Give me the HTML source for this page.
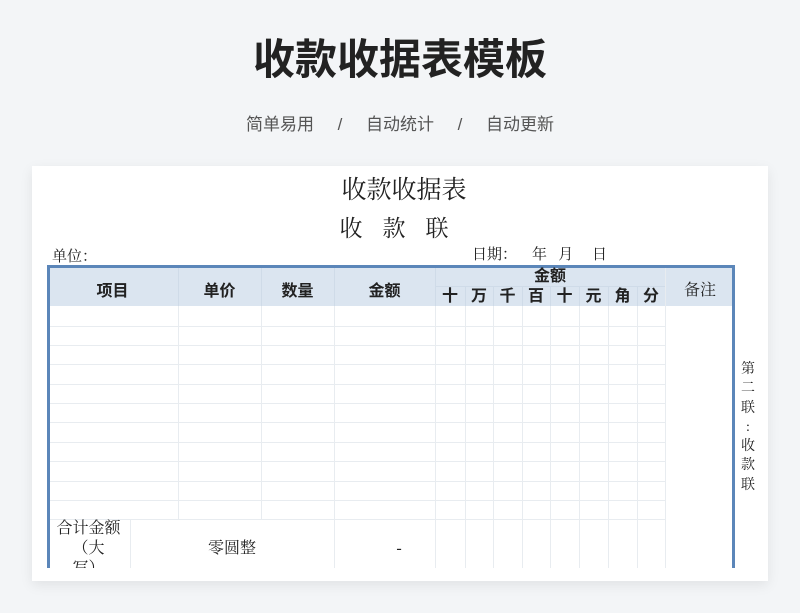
<!DOCTYPE html>
<html><head><meta charset="utf-8"><style>
*{margin:0;padding:0;box-sizing:border-box}
body{width:800px;height:613px;background:#f3f5f7;position:relative;overflow:hidden;font-family:"Liberation Sans","Noto Sans CJK SC",sans-serif}
.a{position:absolute}
.t{position:absolute;left:0;width:800px;text-align:center}
.card{position:absolute;left:32px;top:166px;width:736px;height:415px;background:#fff;box-shadow:0 4px 12px rgba(0,0,0,.08)}
.serif{font-family:"Liberation Serif","Noto Serif CJK SC",serif;color:#222}
.h{background:#dbe5f0}
.vl{position:absolute;width:1px;background:#e8ecf0}
.hl{position:absolute;height:1px;background:#e8ecf0}
.c{position:absolute;text-align:center;color:#222}
</style></head><body>
<div class="t" style="top:32px;font-size:42px;font-weight:bold;color:#222;line-height:56px">收款收据表模板</div>
<div class="t" style="top:113px;font-size:17px;color:#555;line-height:24px;word-spacing:0">简单易用&nbsp;&nbsp;&nbsp;&nbsp;&nbsp;/&nbsp;&nbsp;&nbsp;&nbsp;&nbsp;自动统计&nbsp;&nbsp;&nbsp;&nbsp;&nbsp;/&nbsp;&nbsp;&nbsp;&nbsp;&nbsp;自动更新</div>
<div class="card"></div>
<div class="a serif" style="left:0;width:808px;text-align:center;top:175px;font-size:25px;line-height:32px">收款收据表</div>
<div class="a serif" style="left:0;width:808px;text-align:center;top:214px;font-size:23px;line-height:30px;letter-spacing:20px">收款联</div>
<div class="a serif" style="left:52px;top:247px;font-size:15px;line-height:20px">单位：</div>
<div class="a serif" style="left:472px;top:245px;font-size:15px;line-height:20px;white-space:pre">日期：    年   月     日</div>
<!-- header -->
<div class="a h" style="left:47px;top:266px;width:688px;height:40px"></div>
<div class="a" style="left:47px;top:265px;width:688px;height:310px;border:3px solid #5b86b9;border-bottom:none"></div>
<div id="g"></div>
<div class="c" style="left:47px;top:277px;width:131px;font-size:16px;font-weight:bold">项目</div>
<div class="c" style="left:178px;top:277px;width:83px;font-size:16px;font-weight:bold">单价</div>
<div class="c" style="left:261px;top:277px;width:73px;font-size:16px;font-weight:bold">数量</div>
<div class="c" style="left:334px;top:277px;width:101px;font-size:16px;font-weight:bold">金额</div>
<div class="c" style="left:435px;top:267px;width:230px;font-size:16px;font-weight:bold;line-height:20px">金额</div>
<div class="c serif" style="left:665px;top:277px;width:70px;font-size:16px">备注</div>
<div class="c serif" style="left:47px;top:519px;width:83px;font-size:16px;line-height:20px">合计金额<br>（大<br>写）</div>
<div class="c serif" style="left:130px;top:539px;width:204px;font-size:16px;line-height:20px">零圆整</div>
<div class="c serif" style="left:334px;top:539px;width:130px;font-size:16px;line-height:20px">-</div>
<div class="a serif" style="left:739px;top:360px;width:18px;font-size:14px;line-height:19.3px;text-align:center">第<br>二<br>联<br>:<br>收<br>款<br>联</div>
<div class="a" style="left:32px;top:568px;width:736px;height:13px;background:#fff"></div>
<script>
var g=document.getElementById('g'),h='';
var d=['十','万','千','百','十','元','角','分'],mx=[435,465,493,522,550,579,608,637,665];
for(var i=0;i<8;i++)h+='<div class="c" style="left:'+mx[i]+'px;top:287px;width:'+(mx[i+1]-mx[i])+'px;font-size:16px;font-weight:bold;line-height:20px">'+d[i]+'</div>';
h+='<div class="hl" style="left:435px;top:286px;width:230px;background:#cfdbe8"></div>';
[178,261,334,435].forEach(function(x){h+='<div class="vl" style="left:'+x+'px;top:268px;height:38px;background:#cfdbe8"></div>';h+='<div class="vl" style="left:'+x+'px;top:306px;height:213px"></div>';});
[130,334,435].forEach(function(x){h+='<div class="vl" style="left:'+x+'px;top:519px;height:50px"></div>';});
mx.slice(1,8).forEach(function(x){h+='<div class="vl" style="left:'+x+'px;top:287px;height:19px;background:#cfdbe8"></div><div class="vl" style="left:'+x+'px;top:306px;height:263px"></div>';});
h+='<div class="vl" style="left:665px;top:268px;height:301px"></div>';
[326,345,364,384,403,422,442,461,481,500,519].forEach(function(y){h+='<div class="hl" style="left:50px;top:'+y+'px;width:615px"></div>';});
g.innerHTML=h;
</script>
</body></html>
